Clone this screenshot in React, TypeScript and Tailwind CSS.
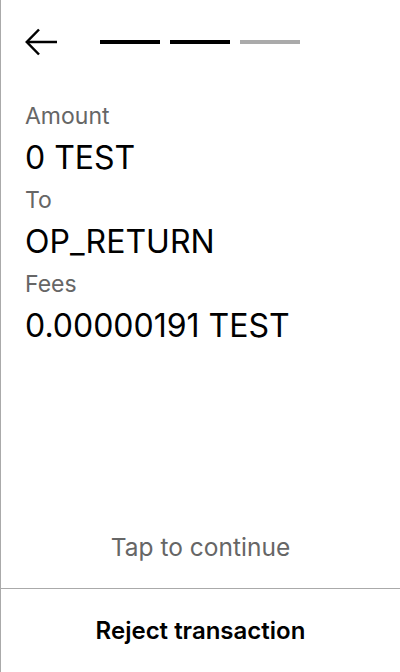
import { useState } from "react";

const STEPS = [true, true, false];

const ROWS = [
  { label: "Amount", value: "0 TEST" },
  { label: "To", value: "OP_RETURN" },
  { label: "Fees", value: "0.00000191 TEST" },
];

function BackArrow() {
  return (
    <svg width="33" height="28" viewBox="0 0 33 28" fill="none" stroke="#000" strokeWidth="2.5">
      <path d="M32 14H2" />
      <path d="M14 1.5L1.8 14L14 26.5" />
    </svg>
  );
}

export default function App() {
  const [tapped, setTapped] = useState(false);

  return (
    <div
      className="flex flex-col h-[672px] w-[400px] bg-white border-l border-[#aaaaaa] text-black"
      style={{ fontFamily: "Inter, 'Noto Sans', sans-serif" }}
    >
      <div className="flex items-center h-[84px] px-6">
        <button className="flex items-center">
          <BackArrow />
        </button>
        <div className="flex gap-[10px] ml-[42px]">
          {STEPS.map((done, i) => (
            <div key={i} className={done ? "w-[60px] h-1 bg-black" : "w-[60px] h-1 bg-[#aaaaaa]"} />
          ))}
        </div>
      </div>

      <div className="flex-1 flex flex-col px-6 pt-[11px]" onClick={() => setTapped(!tapped)}>
        {ROWS.map((row) => (
          <div key={row.label} className="flex flex-col">
            <span className="text-[23px] leading-[42px] text-[#666666]">{row.label}</span>
            <span className="text-[32px] leading-[42px]">{row.value}</span>
          </div>
        ))}
      </div>

      <div className="text-center text-[24.5px] leading-[42px] text-[#666666] mb-[20px]">Tap to continue</div>

      <div className="border-t border-[#aaaaaa] h-[84px] flex items-center justify-center">
        <button className="text-[24px] font-semibold">Reject transaction</button>
      </div>
    </div>
  );
}
